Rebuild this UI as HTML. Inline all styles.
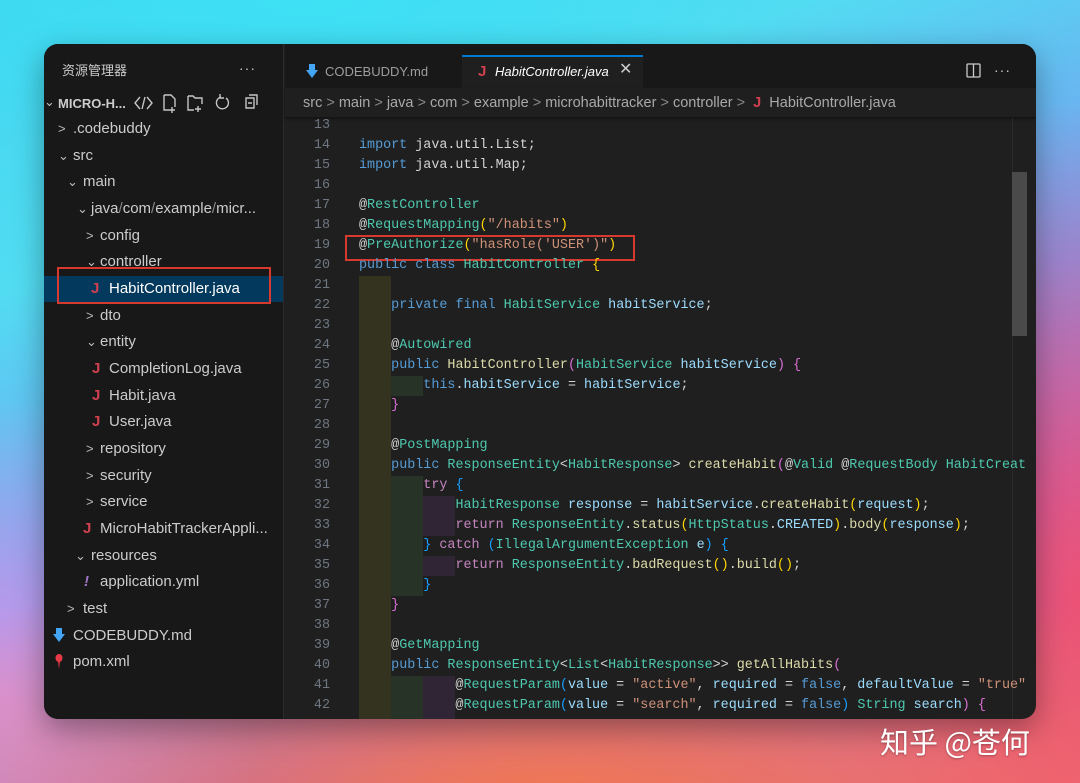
<!DOCTYPE html>
<html><head><meta charset="utf-8">
<style>
*{margin:0;padding:0;box-sizing:border-box}
html,body{width:1080px;height:783px;overflow:hidden}
body{position:relative;font-family:"Liberation Sans","Noto Sans CJK SC",sans-serif;
background:linear-gradient(160deg,#3fd6f0 0%,#52dcf2 25%,#7a98f0 55%,#b06ad0 75%,#e86890 100%);}
.bg2{position:absolute;left:0;top:0;width:1080px;height:783px;
background:radial-gradient(ellipse 750px 280px at 540px 810px,rgba(246,120,70,.95),rgba(246,120,70,0) 100%),
radial-gradient(ellipse 260px 300px at 0px 700px,rgba(220,150,230,.9),rgba(220,150,230,0) 100%),
radial-gradient(ellipse 250px 500px at 1080px 600px,rgba(240,80,110,.9),rgba(240,80,110,0) 100%),
radial-gradient(ellipse 500px 160px at 300px 0px,rgba(60,225,245,.9),rgba(60,225,245,0) 100%);}
.win{position:absolute;left:44px;top:44px;width:992px;height:675px;border-radius:14px;background:#1f1f1f;overflow:hidden;box-shadow:0 10px 30px rgba(0,0,0,.35)}
.side{position:absolute;left:0;top:0;width:240px;height:675px;background:#181818;border-right:1px solid #2b2b2b}
.items{position:absolute;left:0;top:2px;width:240px;height:675px}
.t{position:absolute;color:#cccccc;font-size:15px;white-space:nowrap;line-height:20px}
.ch{position:absolute;color:#bbb;font-size:13px;line-height:20px}
.J{position:absolute;color:#d0404f;font-weight:bold;font-size:15px;line-height:20px}
.code{position:absolute;font-family:"Liberation Mono",monospace;font-size:13.4px;line-height:20px;white-space:pre;color:#d4d4d4}
.ln{position:absolute;left:240px;width:46px;text-align:right;font-family:"Liberation Mono",monospace;font-size:13.4px;line-height:20px;color:#6e7681}
.k{color:#569cd6}.ty{color:#4ec9b0}.s{color:#ce9178}.f{color:#dcdcaa}.v{color:#9cdcfe}.y{color:#ffd700}.p{color:#da70d6}.b{color:#179fff}.r{color:#c586c0}.w{color:#d4d4d4}
</style></head><body>
<div class="bg2"></div>
<div class="win">
 <div class="side">
  <div class="t" style="left:18px;top:17px;font-size:13px">资源管理器</div>
  <div class="t" style="left:195px;top:14px;font-size:14px;letter-spacing:1px">···</div>
  <div class="ch" style="left:0px;top:48px">⌄</div>
  <div class="t" style="left:14px;top:50px;font-size:13px;font-weight:bold">MICRO-H...</div>
  <svg style="position:absolute;left:90px;top:48px" width="130" height="22" fill="none" stroke="#c5c5c5" stroke-width="1.4">
   <path d="M6 5 L1 11 L6 17 M13 5 L18 11 L13 17 M11 5 L8 17"/>
   <path d="M30 3 h7 l4 4 v8 M30 3 v15 h5 M38 15 v6 M35 18 h6"/>
   <path d="M54 4 h5 l2 2 h7 v6 M54 4 v14 h6 M64 14 v6 M61 17 h6"/>
   <path d="M92 6 a6 6 0 1 1 -5 -1 M86 2 v4 h4"/>
   <path d="M112 6 h8 v10 h-8 z M115 3 h8 v10 M114 11 h4"/>
  </svg>
  <div class="items">
  <div class="ch" style="left:14px;top:73px">&gt;</div><div class="t" style="left:29px;top:73px">.codebuddy</div>
  <div class="ch" style="left:14px;top:100px">⌄</div><div class="t" style="left:29px;top:100px">src</div>
  <div class="ch" style="left:23px;top:126px">⌄</div><div class="t" style="left:39px;top:126px">main</div>
  <div class="ch" style="left:33px;top:153px">⌄</div><div class="t" style="left:47px;top:153px">java<span style="color:#888">/</span>com<span style="color:#888">/</span>example<span style="color:#888">/</span>micr...</div>
  <div class="ch" style="left:42px;top:180px">&gt;</div><div class="t" style="left:56px;top:180px">config</div>
  <div class="ch" style="left:42px;top:206px">⌄</div><div class="t" style="left:56px;top:206px">controller</div>
  <div style="position:absolute;left:0;top:230px;width:239px;height:26px;background:#04395e"></div>
  <div style="position:absolute;left:13px;top:221px;width:214px;height:37px;border:2px solid #d63a2f"></div>
  <div class="J" style="left:47px;top:233px">J</div><div class="t" style="left:65px;top:233px;color:#fff">HabitController.java</div>
  <div class="ch" style="left:42px;top:260px">&gt;</div><div class="t" style="left:56px;top:260px">dto</div>
  <div class="ch" style="left:42px;top:286px">⌄</div><div class="t" style="left:56px;top:286px">entity</div>
  <div class="J" style="left:48px;top:313px">J</div><div class="t" style="left:65px;top:313px">CompletionLog.java</div>
  <div class="J" style="left:48px;top:340px">J</div><div class="t" style="left:65px;top:340px">Habit.java</div>
  <div class="J" style="left:48px;top:366px">J</div><div class="t" style="left:65px;top:366px">User.java</div>
  <div class="ch" style="left:42px;top:393px">&gt;</div><div class="t" style="left:56px;top:393px">repository</div>
  <div class="ch" style="left:42px;top:420px">&gt;</div><div class="t" style="left:56px;top:420px">security</div>
  <div class="ch" style="left:42px;top:446px">&gt;</div><div class="t" style="left:56px;top:446px">service</div>
  <div class="J" style="left:39px;top:473px">J</div><div class="t" style="left:56px;top:473px">MicroHabitTrackerAppli...</div>
  <div class="ch" style="left:31px;top:500px">⌄</div><div class="t" style="left:47px;top:500px">resources</div>
  <div class="t" style="left:40px;top:526px;color:#a074c4;font-weight:bold;font-style:italic">!</div><div class="t" style="left:56px;top:526px">application.yml</div>
  <div class="ch" style="left:23px;top:553px">&gt;</div><div class="t" style="left:39px;top:553px">test</div>
  <svg style="position:absolute;left:9px;top:582px" width="12" height="16"><path d="M3 0 h6 v6 h3 l-6 8 l-6 -8 h3z" fill="#42a5f5"/></svg>
  <div class="t" style="left:29px;top:580px">CODEBUDDY.md</div>
  <svg style="position:absolute;left:11px;top:608px" width="8" height="16"><ellipse cx="4" cy="4" rx="3.5" ry="4" fill="#e53946"/><path d="M3 7 h2 l-1 8z" fill="#e53946"/></svg>
  <div class="t" style="left:29px;top:606px">pom.xml</div>
  </div>
 </div>
 <!-- tabs -->
 <div style="position:absolute;left:241px;top:0;width:751px;height:44px;background:#181818"></div>
 <svg style="position:absolute;left:262px;top:20px" width="12" height="16"><path d="M3 0 h6 v6 h3 l-6 8 l-6 -8 h3z" fill="#42a5f5"/></svg>
 <div class="t" style="left:281px;top:18px;font-size:13px;color:#9d9d9d">CODEBUDDY.md</div>
 <div style="position:absolute;left:418px;top:11px;width:181px;height:33px;background:#1f1f1f;border-top:2px solid #0078d4"></div>
 <div class="J" style="left:434px;top:18px">J</div>
 <div class="t" style="left:451px;top:18px;font-size:13px;font-style:italic;color:#fff">HabitController.java</div>
 <div class="t" style="left:575px;top:16px;font-size:16px;color:#ccc">✕</div>
 <svg style="position:absolute;left:922px;top:19px" width="16" height="16" fill="none" stroke="#ccc" stroke-width="1.3"><rect x="1" y="1" width="13" height="13" rx="1"/><path d="M7.5 1v13"/></svg>
 <div class="t" style="left:950px;top:16px;font-size:14px;letter-spacing:1px">···</div>
 <!-- breadcrumb -->
 <div style="position:absolute;left:241px;top:44px;width:751px;height:29px;background:#1f1f1f;box-shadow:0 2px 3px rgba(0,0,0,.4)"></div>
 <div class="t" style="left:259px;top:49px;font-size:14.5px;color:#a9a9a9">src <span style="color:#888">&gt;</span> main <span style="color:#888">&gt;</span> java <span style="color:#888">&gt;</span> com <span style="color:#888">&gt;</span> example <span style="color:#888">&gt;</span> microhabittracker <span style="color:#888">&gt;</span> controller <span style="color:#888">&gt;</span> <b style="color:#d0404f">&nbsp;J&nbsp;</b> HabitController.java</div>
 <!-- scrollbar -->
 <div style="position:absolute;left:968px;top:74px;width:1px;height:601px;background:#2b2b2b"></div>
 <div style="position:absolute;left:968px;top:128px;width:15px;height:164px;background:#4a4a4a"></div>
 <!-- indent guides -->
 <div style="position:absolute;left:315px;top:232px;width:32px;height:445px;background:#33331f"></div>
 <div style="position:absolute;left:347px;top:332px;width:32px;height:20px;background:#263326"></div>
 <div style="position:absolute;left:347px;top:432px;width:32px;height:120px;background:#263326"></div>
 <div style="position:absolute;left:379px;top:452px;width:32px;height:40px;background:#2f2534"></div>
 <div style="position:absolute;left:379px;top:512px;width:32px;height:20px;background:#2f2534"></div>
 <div style="position:absolute;left:347px;top:632px;width:32px;height:45px;background:#263326"></div>
 <div style="position:absolute;left:379px;top:632px;width:32px;height:45px;background:#2f2534"></div>
 <!-- red box -->
 <div style="position:absolute;left:301px;top:191px;width:290px;height:26px;border:2px solid #d63a2f"></div>
 <!-- line numbers -->
 <div class="ln" style="top:72px">13<br>14<br>15<br>16<br>17<br>18<br>19<br>20<br>21<br>22<br>23<br>24<br>25<br>26<br>27<br>28<br>29<br>30<br>31<br>32<br>33<br>34<br>35<br>36<br>37<br>38<br>39<br>40<br>41<br>42</div>
 <div class="code" style="left:315px;top:72px">
<span class="k">import</span> java.util.List;
<span class="k">import</span> java.util.Map;

@<span class="ty">RestController</span>
@<span class="ty">RequestMapping</span><span class="y">(</span><span class="s">"/habits"</span><span class="y">)</span>
@<span class="ty">PreAuthorize</span><span class="y">(</span><span class="s">"hasRole('USER')"</span><span class="y">)</span>
<span class="k">public class</span> <span class="ty">HabitController</span> <span class="y">{</span>

    <span class="k">private final</span> <span class="ty">HabitService</span> <span class="v">habitService</span>;

    @<span class="ty">Autowired</span>
    <span class="k">public</span> <span class="f">HabitController</span><span class="p">(</span><span class="ty">HabitService</span> <span class="v">habitService</span><span class="p">)</span> <span class="p">{</span>
        <span class="k">this</span>.<span class="v">habitService</span> = <span class="v">habitService</span>;
    <span class="p">}</span>

    @<span class="ty">PostMapping</span>
    <span class="k">public</span> <span class="ty">ResponseEntity</span>&lt;<span class="ty">HabitResponse</span>&gt; <span class="f">createHabit</span><span class="p">(</span>@<span class="ty">Valid</span> @<span class="ty">RequestBody</span> <span class="ty">HabitCreat</span>
        <span class="r">try</span> <span class="b">{</span>
            <span class="ty">HabitResponse</span> <span class="v">response</span> = <span class="v">habitService</span>.<span class="f">createHabit</span><span class="y">(</span><span class="v">request</span><span class="y">)</span>;
            <span class="r">return</span> <span class="ty">ResponseEntity</span>.<span class="f">status</span><span class="y">(</span><span class="ty">HttpStatus</span>.<span class="v">CREATED</span><span class="y">)</span>.<span class="f">body</span><span class="y">(</span><span class="v">response</span><span class="y">)</span>;
        <span class="b">}</span> <span class="r">catch</span> <span class="b">(</span><span class="ty">IllegalArgumentException</span> <span class="v">e</span><span class="b">)</span> <span class="b">{</span>
            <span class="r">return</span> <span class="ty">ResponseEntity</span>.<span class="f">badRequest</span><span class="y">()</span>.<span class="f">build</span><span class="y">()</span>;
        <span class="b">}</span>
    <span class="p">}</span>

    @<span class="ty">GetMapping</span>
    <span class="k">public</span> <span class="ty">ResponseEntity</span>&lt;<span class="ty">List</span>&lt;<span class="ty">HabitResponse</span>&gt;&gt; <span class="f">getAllHabits</span><span class="p">(</span>
            @<span class="ty">RequestParam</span><span class="b">(</span><span class="v">value</span> = <span class="s">"active"</span>, <span class="v">required</span> = <span class="k">false</span>, <span class="v">defaultValue</span> = <span class="s">"true"</span>
            @<span class="ty">RequestParam</span><span class="b">(</span><span class="v">value</span> = <span class="s">"search"</span>, <span class="v">required</span> = <span class="k">false</span><span class="b">)</span> <span class="ty">String</span> <span class="v">search</span><span class="p">)</span> <span class="p">{</span></div>
</div>
<div style="position:absolute;left:880px;top:720px;font-size:29px;color:#fff;font-family:'Noto Sans CJK SC','Liberation Sans',sans-serif;text-shadow:0 1px 2px rgba(0,0,0,.3)">知乎 @苍何</div>
</body></html>
